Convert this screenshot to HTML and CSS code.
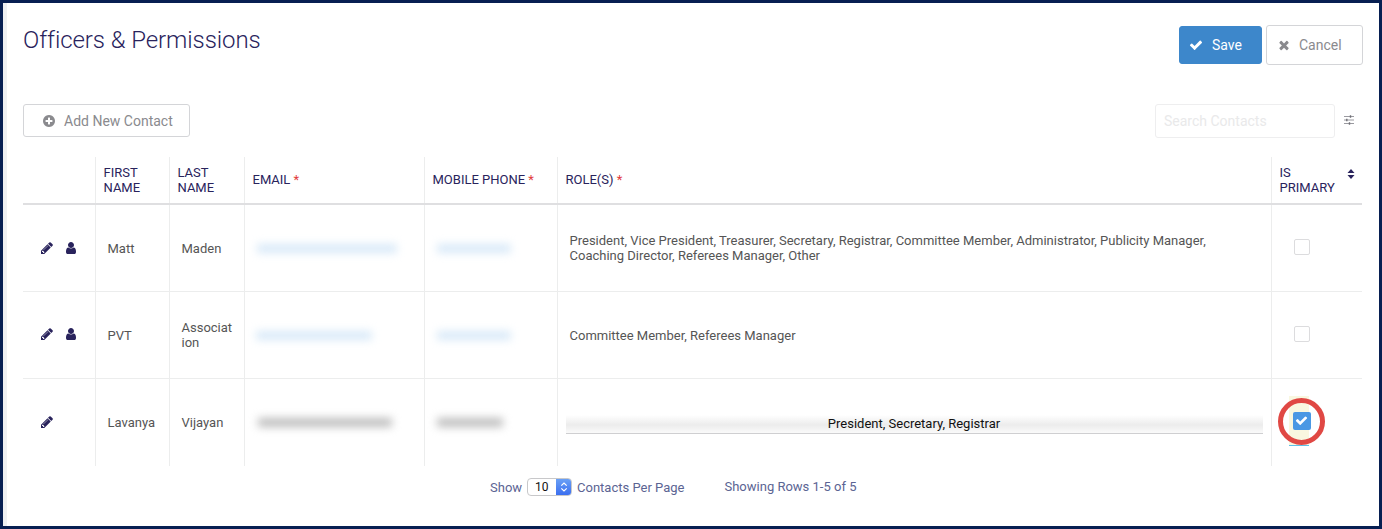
FILE: index.html
```html
<!DOCTYPE html>
<html lang="en">
<head>
<meta charset="utf-8">
<title>Officers &amp; Permissions</title>
<link rel="stylesheet" href="styles.css">
</head>
<body>
<main class="frame">
  <header class="top">
    <h1 class="title">Officers &amp; Permissions</h1>
    <div class="actions">
      <button class="btn btn-save"><svg class="ic-14" viewBox="0 0 1792 1792"><path d="M1671 566q0 40-28 68l-724 724-136 136q-28 28-68 28t-68-28l-136-136-362-362q-28-28-28-68t28-68l136-136q28-28 68-28t68 28l294 295 656-657q28-28 68-28t68 28l136 136q28 28 28 68z"/></svg>Save</button>
      <button class="btn btn-cancel"><svg class="ic-14" viewBox="0 0 1792 1792"><path d="M1490 1322q0 40-28 68l-136 136q-28 28-68 28t-68-28l-294-294-294 294q-28 28-68 28t-68-28l-136-136q-28-28-28-68t28-68l294-294-294-294q-28-28-28-68t28-68l136-136q28-28 68-28t68 28l294 294 294-294q28-28 68-28t68 28l136 136q28 28 28 68t-28 68l-294 294 294 294q28 28 28 68z"/></svg>Cancel</button>
    </div>
  </header>

  <div class="toolbar">
    <button class="btn btn-add"><svg class="ic-14" viewBox="0 0 1792 1792"><path d="M1344 960v-128q0-26-19-45t-45-19h-256v-256q0-26-19-45t-45-19h-128q-26 0-45 19t-19 45v256h-256q-26 0-45 19t-19 45v128q0 26 19 45t45 19h256v256q0 26 19 45t45 19h128q26 0 45-19t19-45v-256h256q26 0 45-19t19-45zm320-64q0 209-103 385.5t-279.5 279.5-385.5 103-385.5-103-279.5-279.5-103-385.5 103-385.5 279.5-279.5 385.5-103 385.5 103 279.5 279.5 103 385.5z"/></svg>Add New Contact</button>
    <div class="search-wrap">
      <input class="search" type="text" placeholder="Search Contacts">
      <svg class="sliders" viewBox="0 0 10 10"><path d="M0 1.5h10M0 5h10M0 8.5h10"/><path class="knob" d="M6.5.3v2.4M2.8 3.8v2.4M5.5 7.3v2.4"/></svg>
    </div>
  </div>

  <div class="table-clip">
    <table class="grid">
      <colgroup>
        <col class="c-act"><col class="c-first"><col class="c-last"><col class="c-email"><col class="c-phone"><col class="c-roles"><col class="c-prim">
      </colgroup>
      <thead>
        <tr>
          <th></th>
          <th>FIRST NAME</th>
          <th>LAST NAME</th>
          <th><span class="lift">EMAIL <span class="req">*</span></span></th>
          <th><span class="lift">MOBILE PHONE <span class="req">*</span></span></th>
          <th><span class="lift">ROLE(S) <span class="req">*</span></span></th>
          <th class="th-sort">IS PRIMARY<svg class="sort" viewBox="0 0 8 10"><path d="M4 0l3.5 4h-7zM4 10L.5 6h7z"/></svg></th>
        </tr>
      </thead>
      <tbody>
        <tr>
          <td class="act">
            <svg class="ic-act" viewBox="0 0 1792 1792"><path d="M491 1536l91-91-235-235-91 91v107h128v128h107zm523-928q0-22-22-22-10 0-17 7l-542 542q-7 7-7 17 0 22 22 22 10 0 17-7l542-542q7-7 7-17zm-54-192l416 416-832 832h-416v-416zm683 96q0 53-37 90l-166 166-416-416 166-165q36-38 90-38 53 0 91 38l235 234q37 39 37 91z"/></svg>
            <svg class="ic-act" viewBox="0 0 1792 1792"><path d="M1536 1399q0 109-62.5 187t-150.5 78h-854q-88 0-150.5-78t-62.5-187q0-85 8.5-160.5t31.5-152 58.5-131 94-89 134.5-34.5q131 128 313 128t313-128q76 0 134.5 34.5t94 89 58.5 131 31.5 152 8.5 160.5zm-256-887q0 159-112.5 271.5t-271.5 112.5-271.5-112.5-112.5-271.5 112.5-271.5 271.5-112.5 271.5 112.5 112.5 271.5z"/></svg>
          </td>
          <td>Matt</td>
          <td>Maden</td>
          <td><div class="blur blue b-e1"></div></td>
          <td><div class="blur blue b-p1"></div></td>
          <td>President, Vice President, Treasurer, Secretary, Registrar, Committee Member, Administrator, Publicity Manager, Coaching Director, Referees Manager, Other</td>
          <td class="prim"><span class="check"></span></td>
        </tr>
        <tr>
          <td class="act">
            <svg class="ic-act" viewBox="0 0 1792 1792"><path d="M491 1536l91-91-235-235-91 91v107h128v128h107zm523-928q0-22-22-22-10 0-17 7l-542 542q-7 7-7 17 0 22 22 22 10 0 17-7l542-542q7-7 7-17zm-54-192l416 416-832 832h-416v-416zm683 96q0 53-37 90l-166 166-416-416 166-165q36-38 90-38 53 0 91 38l235 234q37 39 37 91z"/></svg>
            <svg class="ic-act" viewBox="0 0 1792 1792"><path d="M1536 1399q0 109-62.5 187t-150.5 78h-854q-88 0-150.5-78t-62.5-187q0-85 8.5-160.5t31.5-152 58.5-131 94-89 134.5-34.5q131 128 313 128t313-128q76 0 134.5 34.5t94 89 58.5 131 31.5 152 8.5 160.5zm-256-887q0 159-112.5 271.5t-271.5 112.5-271.5-112.5-112.5-271.5 112.5-271.5 271.5-112.5 271.5 112.5 112.5 271.5z"/></svg>
          </td>
          <td>PVT</td>
          <td class="breakall">Association</td>
          <td><div class="blur blue b-e2"></div></td>
          <td><div class="blur blue b-p2"></div></td>
          <td>Committee Member, Referees Manager</td>
          <td class="prim"><span class="check"></span></td>
        </tr>
        <tr>
          <td class="act">
            <svg class="ic-act" viewBox="0 0 1792 1792"><path d="M491 1536l91-91-235-235-91 91v107h128v128h107zm523-928q0-22-22-22-10 0-17 7l-542 542q-7 7-7 17 0 22 22 22 10 0 17-7l542-542q7-7 7-17zm-54-192l416 416-832 832h-416v-416zm683 96q0 53-37 90l-166 166-416-416 166-165q36-38 90-38 53 0 91 38l235 234q37 39 37 91z"/></svg>
          </td>
          <td>Lavanya</td>
          <td>Vijayan</td>
          <td><div class="blur gray b-e3"></div></td>
          <td><div class="blur gray b-p3"></div></td>
          <td class="role-cell"><div class="role-select">President, Secretary, Registrar</div></td>
          <td class="prim prim-on">
            <span class="hl"><span class="check on"><svg viewBox="0 0 1792 1792"><path d="M1671 566q0 40-28 68l-724 724-136 136q-28 28-68 28t-68-28l-136-136-362-362q-28-28-28-68t28-68l136-136q28-28 68-28t68 28l294 295 656-657q28-28 68-28t68 28l136 136q28 28 28 68z"/></svg></span></span>
            <span class="ring"></span>
          </td>
        </tr>
      </tbody>
    </table>
  </div>

  <footer class="pager">
    <span class="show">Show</span>
    <span class="select"><span class="sel-val">10</span><span class="sel-arrows"><svg viewBox="0 0 8 12"><path d="M1.3 4.6L4 2l2.7 2.6M1.3 7.4L4 10l2.7-2.6"/></svg></span></span>
    <span class="per">Contacts Per Page</span>
    <span class="rows">Showing Rows 1-5 of 5</span>
  </footer>
</main>
</body>
</html>
```

FILE: styles.css
```css
* { box-sizing: border-box; }
html, body { margin: 0; padding: 0; background: #fff; }
body { width: 1382px; height: 529px; overflow: hidden; font-family: Roboto, "Liberation Sans", sans-serif; }

.frame {
  width: 1382px;
  height: 529px;
  border-style: solid;
  border-color: #071f52;
  border-width: 3px 3px 3px 3px;
  box-shadow: inset 4px 0 0 #eef0f2;
  padding: 22px 16px 0 20px;
  color: #29235c;
}

.top { display: flex; justify-content: space-between; align-items: flex-start; height: 79px; }
.title { margin: 0; font-size: 24px; font-weight: 300; line-height: 30px; color: #29235c; letter-spacing: -.08px; }
.actions { display: flex; align-items: center; gap: 4px; height: 40px; }

.btn {
  display: inline-flex;
  align-items: center;
  font-family: inherit;
  font-size: 14px;
  border-radius: 3px;
  padding: 0;
  background: #fff;
  color: #8a8a8e;
  border: 1px solid #d4d5d8;
}
.btn svg { fill: currentColor; }
.ic-14 { width: 14px; height: 14px; flex: none; }
.btn-save { width: 83px; height: 38px; background: #3d87cb; border-color: #3d87cb; color: #fff; padding-left: 9px; gap: 9px; }
.btn-cancel { width: 97px; height: 40px; padding-left: 10px; gap: 8px; }
.btn-add { width: 167px; height: 33px; padding-left: 18px; gap: 8px; }

.toolbar { display: flex; justify-content: space-between; align-items: flex-start; height: 53px; }
.search-wrap { display: flex; align-items: center; gap: 9px; margin-right: 9px; }
.search {
  width: 180px; height: 34px; border: 1px solid #eeeeef; border-radius: 3px;
  padding: 0 8px; font-family: inherit; font-size: 14px; outline: none;
}
.search::placeholder { color: #e9e9ea; opacity: 1; }
.sliders { width: 10px; height: 10px; margin-top: -2px; }
.sliders path { stroke: #9a9aa0; stroke-width: 1; fill: none; }
.sliders .knob { stroke: #6f6f76; stroke-width: 1.4; }

.table-clip { width: 1339px; height: 310px; overflow: hidden; }
.grid { width: 1339px; table-layout: fixed; border-collapse: collapse; font-size: 13px; }
.c-act { width: 72px; } .c-first { width: 74px; } .c-last { width: 75px; } .c-email { width: 180px; }
.c-phone { width: 133px; } .c-roles { width: 714px; } .c-prim { width: 91px; }

th {
  height: 47px; padding: 0 8px; font-weight: 400; font-size: 13px; line-height: 15px; text-align: left;
  color: #29235c; border-left: 1px solid #eceded; border-bottom: 2px solid #dfdfe1; position: relative;
}
.lift { display: block; margin-bottom: 2px; }
th:first-child, td:first-child { border-left: 0; }
td {
  height: 87px; padding: 1px 12px 0; line-height: 15px; color: #555;
  border-left: 1px solid #eceded; border-bottom: 1px solid #eceded; vertical-align: middle;
}
tbody tr:last-child td { border-bottom: 0; height: 88px; }
.breakall { word-break: break-all; padding-right: 10px; }
.req { color: #e23b3b; }
.th-sort { padding-right: 24px; }
.sort { width: 8px; height: 10px; fill: #29235c; position: absolute; right: 7px; top: 12px; }

.act { padding: 0 0 2px 17px; white-space: nowrap; }
.ic-act { width: 14px; height: 14px; fill: #29235c; margin-right: 7px; vertical-align: middle; }

.blur { filter: blur(4px); height: 9px; border-radius: 2px; }
.blue { background: #d8e9f8; }
.gray { background: #bdbdbd; }
.b-e1 { width: 140px; } .b-p1 { width: 74px; }
.b-e2 { width: 116px; margin-left: -1px; } .b-p2 { width: 74px; }
.b-e3 { width: 134px; margin-left: 1px; } .b-p3 { width: 66px; }

.check { display: block; width: 16px; height: 16px; border: 1px solid #dcdcde; border-radius: 2px; background: #fff; margin: -1px 0 0 10px; }
.prim { padding: 0 0 0 12px; position: relative; }
.check.on { width: 18px; height: 18px; margin: 0; background: #4a98e4; border: 0; display: flex; align-items: center; justify-content: center; }
.check.on svg { width: 13px; height: 13px; fill: #fff; }
.prim-on { position: relative; }
.hl {
  position: absolute; left: 17px; top: 17px; width: 20px; height: 50px; background: #f9f7e0;
  border-bottom: 1px solid #5ec0e8; display: flex; justify-content: flex-start; align-items: flex-start;
}
.hl .check.on { margin: 16px 0 0 4px; flex: none; }
.ring {
  position: absolute; left: 6px; top: 19px; width: 47px; height: 47px;
  border: 5px solid #e04844; border-radius: 50%;
}

.role-cell { padding: 0 8px; }
.role-select {
  height: 19px; line-height: 18px; text-align: center; color: #111; margin-top: 4px;
  border-bottom: 1px solid #cfcfd1; background: linear-gradient(#fff, #ececec 55%, #fafafa);
}

.pager { display: flex; align-items: center; height: 40px; padding-left: 467px; font-size: 13px; color: #5b6493; }
.select {
  display: flex; width: 45px; height: 18px; margin: 0 5px; border: 1px solid #c8c8ca; border-radius: 4px; overflow: hidden;
  font-size: 12px; color: #111; align-items: stretch;
}
.sel-val { flex: 1; padding-left: 7px; line-height: 16px; }
.sel-arrows { width: 15px; background: linear-gradient(#6aa0f5, #3b6ff0); display: flex; align-items: center; justify-content: center; }
.sel-arrows svg { width: 8px; height: 12px; fill: none; stroke: #fff; stroke-width: 1.2; }
.rows { margin-left: 40px; margin-top: -2px; }
```
